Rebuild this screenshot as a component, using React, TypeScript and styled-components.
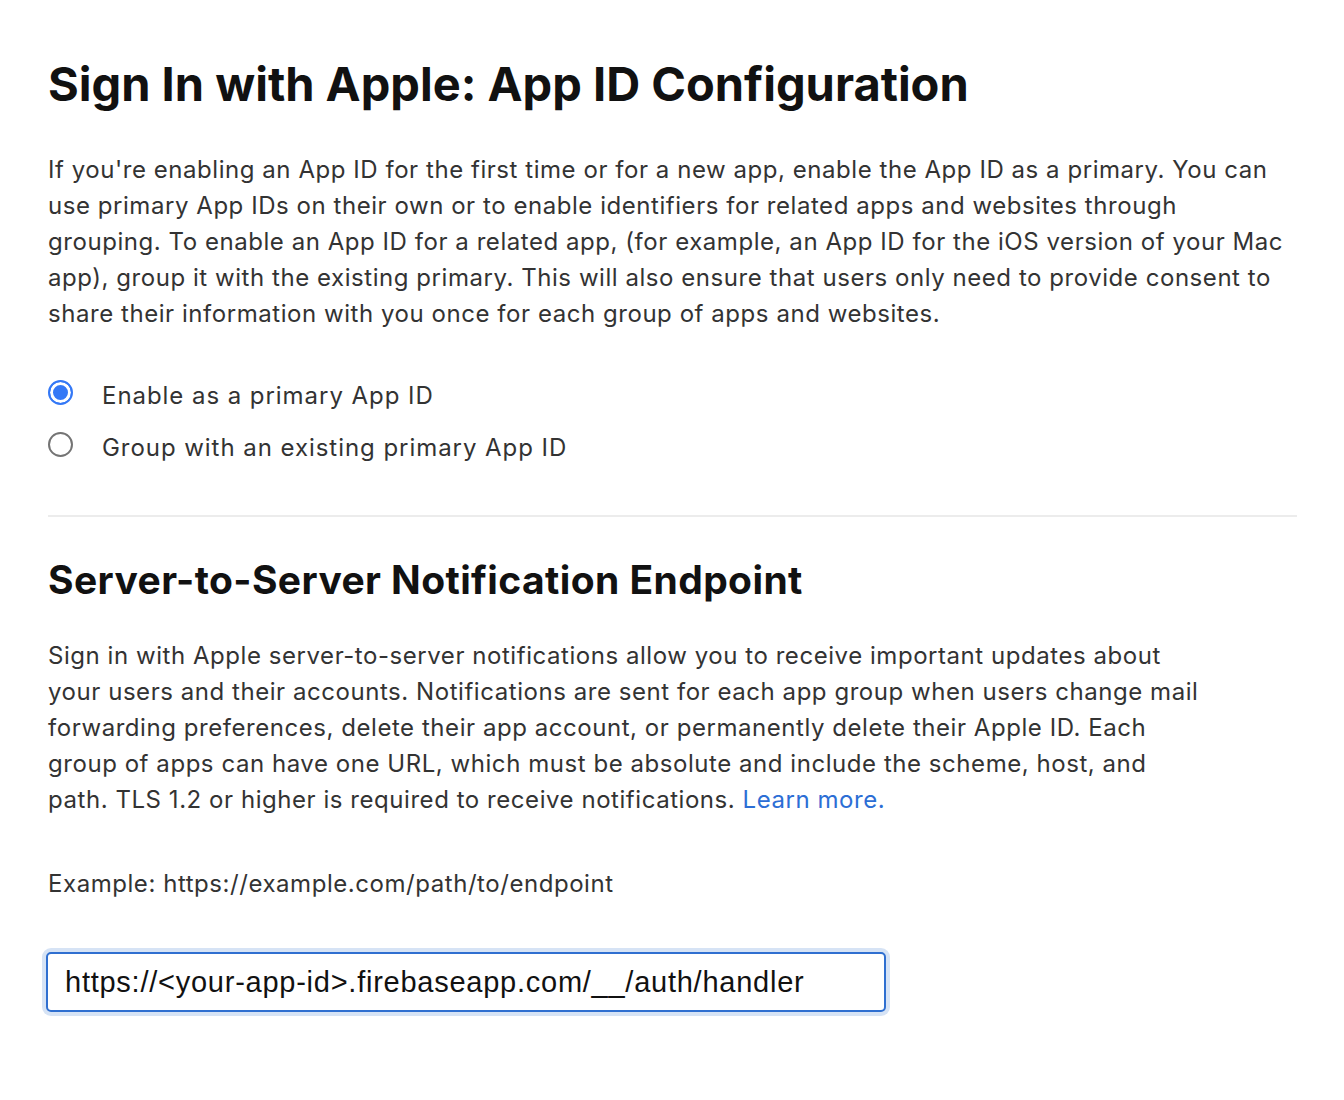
import React from 'react';
import styled, { createGlobalStyle } from 'styled-components';

const GlobalStyle = createGlobalStyle`
  body {
    margin: 0;
    background: #fff;
    font-family: Inter, "Noto Sans", sans-serif;
    -webkit-font-smoothing: antialiased;
  }
`;

const Page = styled.div`
  padding: 52px 47px 80px 48px;
  width: 1249px;
`;

const Title = styled.h1`
  margin: 0 0 36px 0;
  font-size: 47px;
  line-height: 64px;
  font-weight: 700;
  color: #111;
  letter-spacing: 0;
`;

const SectionTitle = styled.h2`
  margin: 0 0 32px 0;
  font-size: 39px;
  line-height: 52px;
  font-weight: 700;
  color: #111;
  letter-spacing: 0.4px;
`;

const Text = styled.p`
  margin: 0;
  font-size: 24px;
  line-height: 36px;
  letter-spacing: 0.55px;
  white-space: nowrap;
  color: #333;
`;

const Link = styled.a`
  color: #2c6ed5;
  text-decoration: none;
`;

const RadioGroup = styled.div`
  display: flex;
  flex-direction: column;
  gap: 16px;
  margin: 46px 0 49px 0;
`;

const RadioRow = styled.label`
  display: flex;
  align-items: center;
  gap: 29px;
  font-size: 24px;
  line-height: 36px;
  letter-spacing: 0.95px;
  color: #333;
  cursor: pointer;
`;

const RadioDot = styled.span<{ $checked?: boolean }>`
  box-sizing: border-box;
  width: 25px;
  height: 25px;
  border-radius: 50%;
  flex-shrink: 0;
  margin-top: -8px;
  border: ${({ $checked }) => ($checked ? '2px solid #3478f6' : '2px solid #747474')};
  background: ${({ $checked }) => ($checked ? '#3478f6' : '#fff')};
  box-shadow: ${({ $checked }) => ($checked ? 'inset 0 0 0 3px #fff' : 'none')};
`;

const Divider = styled.hr`
  border: none;
  height: 2px;
  background: #ececec;
  margin: 0 0 37px 0;
`;

const Example = styled.p`
  margin: 48px 0 46px 0;
  font-size: 24px;
  line-height: 36px;
  letter-spacing: 0.55px;
  color: #333;
`;

const FieldRing = styled.div`
  display: inline-block;
  padding: 4px;
  margin-left: -6px;
  border-radius: 9px;
  background: #d6e3f5;
`;

const Input = styled.input`
  box-sizing: border-box;
  display: block;
  width: 840px;
  height: 60px;
  padding: 0 17px;
  border: 2px solid #2f6fd0;
  border-radius: 5px;
  outline: none;
  background: #fff;
  font-family: "Liberation Sans", Arial, sans-serif;
  font-size: 29px;
  letter-spacing: 0.75px;
  color: #111;
`;

export default function App() {
  return (
    <>
      <GlobalStyle />
      <Page>
        <Title>Sign In with Apple: App ID Configuration</Title>
        <Text>
          If you're enabling an App ID for the first time or for a new app, enable the App ID as a
          primary. You can
          <br />
          use primary App IDs on their own or to enable identifiers for related apps and websites
          through
          <br />
          grouping. To enable an App ID for a related app, (for example, an App ID for the iOS
          version of your Mac
          <br />
          app), group it with the existing primary. This will also ensure that users only need to
          provide consent to
          <br />
          share their information with you once for each group of apps and websites.
        </Text>
        <RadioGroup>
          <RadioRow>
            <RadioDot $checked />
            Enable as a primary App ID
          </RadioRow>
          <RadioRow>
            <RadioDot />
            Group with an existing primary App ID
          </RadioRow>
        </RadioGroup>
        <Divider />
        <SectionTitle>Server-to-Server Notification Endpoint</SectionTitle>
        <Text>
          Sign in with Apple server-to-server notifications allow you to receive important updates
          about
          <br />
          your users and their accounts. Notifications are sent for each app group when users
          change mail
          <br />
          forwarding preferences, delete their app account, or permanently delete their Apple ID.
          Each
          <br />
          group of apps can have one URL, which must be absolute and include the scheme, host, and
          <br />
          path. TLS 1.2 or higher is required to receive notifications.{' '}
          <Link href="#">Learn more.</Link>
        </Text>
        <Example>Example: https://example.com/path/to/endpoint</Example>
        <FieldRing>
          <Input defaultValue="https://<your-app-id>.firebaseapp.com/__/auth/handler" readOnly />
        </FieldRing>
      </Page>
    </>
  );
}
